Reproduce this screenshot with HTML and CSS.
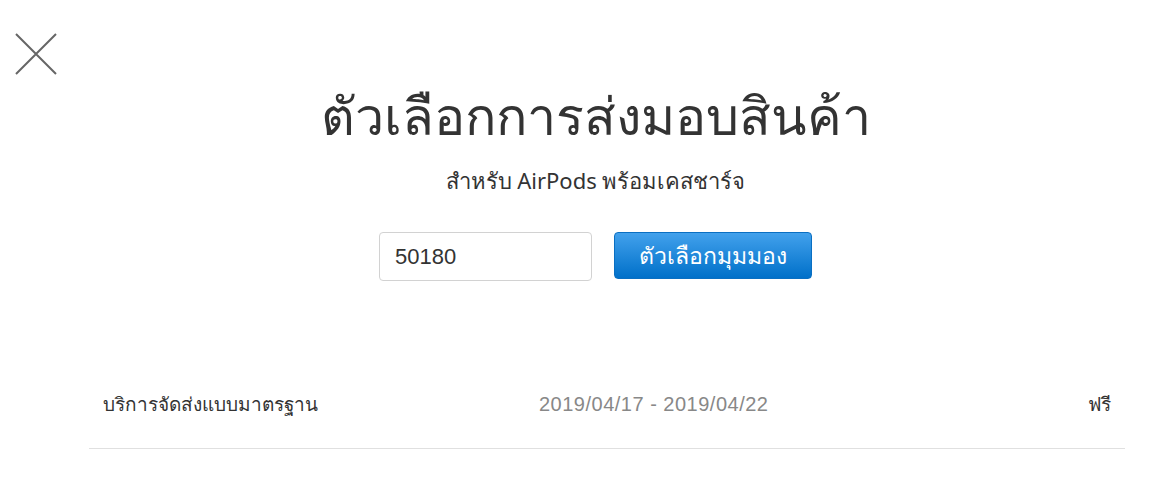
FILE: index.html
```html
<!DOCTYPE html>
<html lang="th">
<head>
<meta charset="utf-8">
<link rel="stylesheet" href="styles.css">
</head>
<body>
<div class="page">
  <button class="close" aria-label="ปิด">
    <svg width="42" height="42" viewBox="0 0 42 42"><path d="M1 1 L41 41 M41 1 L1 41" stroke="#666" stroke-width="2" fill="none"/></svg>
  </button>
  <header class="head">
    <h1 class="title">ตัวเลือกการส่งมอบสินค้า</h1>
    <p class="sub">สำหรับ AirPods พร้อมเคสชาร์จ</p>
    <form class="lookup">
      <input class="zip" type="text" value="50180">
      <button class="go" type="button">ตัวเลือกมุมมอง</button>
    </form>
  </header>
  <div class="rows">
    <div class="row">
      <span class="name">บริการจัดส่งแบบมาตรฐาน</span>
      <span class="date">2019/04/17 - 2019/04/22</span>
      <span class="price">ฟรี</span>
    </div>
  </div>
</div>
</body>
</html>
```
FILE: styles.css
```css
html, body { margin: 0; padding: 0; background: #fff; }
body { font-family: "Noto Sans", "Liberation Sans", sans-serif; color: #333; }
.page { position: relative; width: 1165px; height: 496px; }
.close { position: absolute; left: 15px; top: 33px; padding: 0; border: 0; background: none; width: 42px; height: 42px; }
.close svg { display: block; }
.head { display: flex; flex-direction: column; align-items: center; padding-top: 75px; padding-left: 26px; }
.title { margin: 0; font-size: 52px; font-weight: 400; line-height: 80px; color: #333; }
.sub { margin: 10px 0 0; font-size: 22px; line-height: 30px; color: #333; }
.lookup { display: flex; gap: 22px; margin-top: 37px; }
.zip { box-sizing: border-box; width: 213px; height: 49px; border: 1px solid #d2d2d2; border-radius: 4px; padding: 0 15px; font: 22px "Liberation Sans", sans-serif; color: #333; }
.go { box-sizing: border-box; width: 198px; height: 47px; border: 1px solid #0a6fc2; border-radius: 4px; background: linear-gradient(#42a1ec, #0070c9); color: #fff; font: 23px "Noto Sans", "Liberation Sans", sans-serif; }
.rows { margin: 99px 40px 0 89px; }
.row { display: grid; grid-template-columns: 436px 1fr auto; align-items: center; padding: 10px 14px 30px; border-bottom: 1px solid #e0e0e0; font-size: 19px; line-height: 28px; }
.date { font-family: "Liberation Sans", sans-serif; font-size: 20px; letter-spacing: 0.5px; color: #888; }
```
